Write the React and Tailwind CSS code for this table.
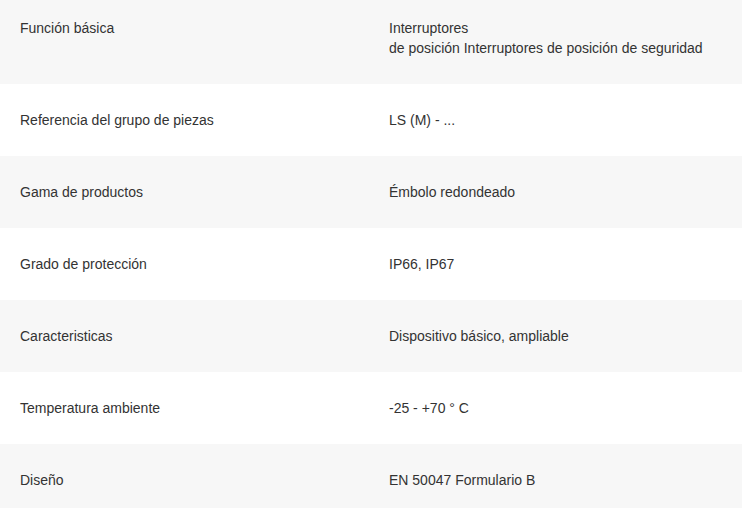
import React from "react";

const rows = [
  ["Función básica", ["Interruptores", "de posición Interruptores de posición de seguridad"]],
  ["Referencia del grupo de piezas", ["LS (M) - ..."]],
  ["Gama de productos", ["Émbolo redondeado"]],
  ["Grado de protección", ["IP66, IP67"]],
  ["Caracteristicas", ["Dispositivo básico, ampliable"]],
  ["Temperatura ambiente", ["-25 - +70 ° C"]],
  ["Diseño", ["EN 50047 Formulario B"]],
];

export default function App() {
  return (
    <div
      className="w-[742px] h-[508px] overflow-hidden bg-white text-[14px] leading-[20px] text-[#333333]"
      style={{ fontFamily: '"Liberation Sans", Arial, sans-serif' }}
    >
      {rows.map(([label, value], i) => (
        <div
          key={i}
          className={`grid grid-cols-[389px_1fr] ${i % 2 === 0 ? "bg-[#f7f7f7]" : "bg-white"} ${i === 0 ? "pt-[18px] pb-[26px]" : "py-[26px]"}`}
        >
          <div className="pl-[20px]">{label}</div>
          <div className="pr-[20px]">
            {value.map((v, j) => (
              <div key={j}>{v}</div>
            ))}
          </div>
        </div>
      ))}
    </div>
  );
}
